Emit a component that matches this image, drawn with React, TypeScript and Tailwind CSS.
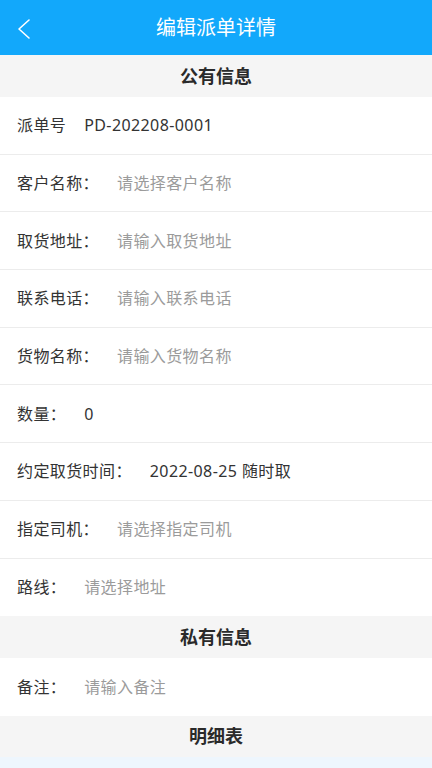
import React from "react";

const font = { fontFamily: '"Noto Sans", "Noto Sans CJK SC", sans-serif' };

type RowProps = { label: string; value: string; placeholder?: boolean; last?: boolean };

function Row({ label, value, placeholder, last }: RowProps) {
  return (
    <div
      className={`flex h-[57.7px] items-center bg-white pl-[17px] text-[16px] tracking-[0.4px] ${
        last ? "" : "border-b border-[#ececec]"
      }`}
    >
      <span className="text-[#333333]">{label}</span>
      <span className={`ml-[18px] ${placeholder ? "text-[#9b9b9b]" : "text-[#333333]"}`}>{value}</span>
    </div>
  );
}

function Section({ title, h = "h-[42px]" }: { title: string; h?: string }) {
  return (
    <div className={`flex ${h} items-center justify-center bg-[#f5f5f5] text-[18px] font-bold text-[#2a2a2a]`}>
      {title}
    </div>
  );
}

export default function App() {
  return (
    <div style={font} className="flex h-[768px] w-[432px] flex-col overflow-hidden bg-[#eef6fd]">
      <div className="relative flex h-[55px] shrink-0 items-center justify-center bg-[#12a8fb]">
        <svg
          className="absolute left-[16px] top-[17px]"
          width="16"
          height="24"
          viewBox="0 0 16 24"
          fill="none"
          stroke="white"
          strokeWidth="1.6"
          strokeLinecap="round"
          strokeLinejoin="round"
        >
          <path d="M13 3 L3 12 L13 21" />
        </svg>
        <span className="text-[20px] text-white">编辑派单详情</span>
      </div>
      <Section title="公有信息" />
      <Row label="派单号" value="PD-202208-0001" />
      <Row label="客户名称：" value="请选择客户名称" placeholder />
      <Row label="取货地址：" value="请输入取货地址" placeholder />
      <Row label="联系电话：" value="请输入联系电话" placeholder />
      <Row label="货物名称：" value="请输入货物名称" placeholder />
      <Row label="数量：" value="0" />
      <Row label="约定取货时间：" value="2022-08-25 随时取" />
      <Row label="指定司机：" value="请选择指定司机" placeholder />
      <Row label="路线：" value="请选择地址" placeholder last />
      <Section title="私有信息" />
      <Row label="备注：" value="请输入备注" placeholder last />
      <Section title="明细表" h="h-[41px]" />
    </div>
  );
}
